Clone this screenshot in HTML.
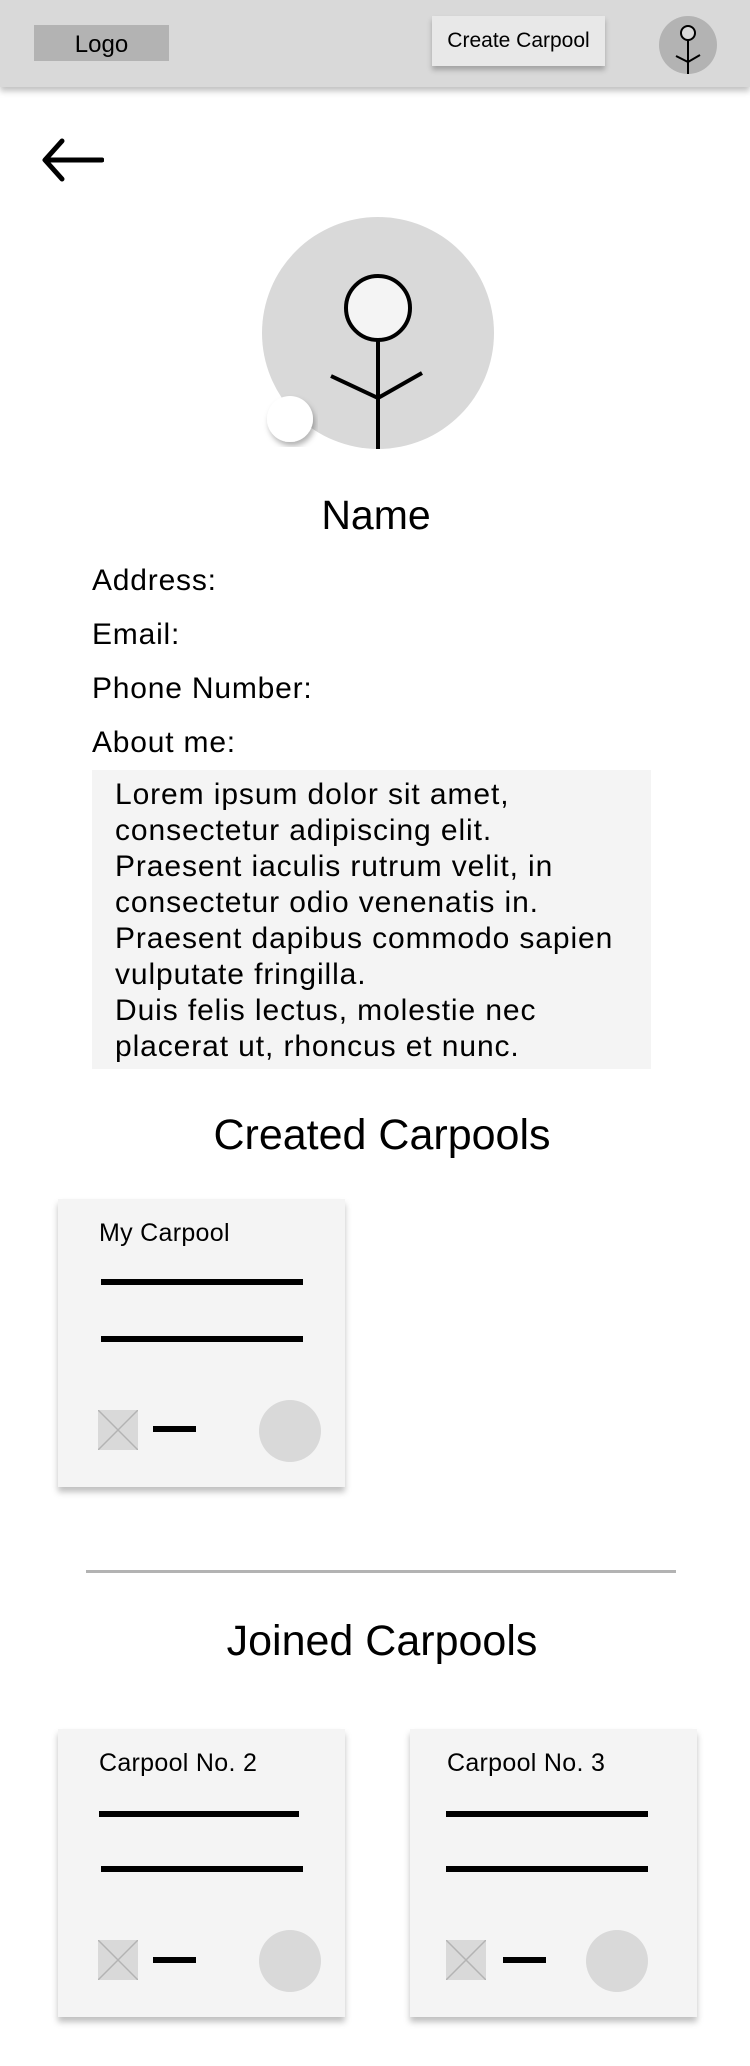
<!DOCTYPE html>
<html><head><meta charset="utf-8"><style>
*{margin:0;padding:0;box-sizing:border-box}
body{width:750px;height:2066px;background:#fff;position:relative;font-family:"Liberation Sans",sans-serif;color:#000;overflow:hidden}
.a{position:absolute}
.hdr{left:0;top:0;width:750px;height:87px;background:#d9d9d9;box-shadow:0 4px 6px rgba(0,0,0,.25)}
.card{background:#f4f4f4;box-shadow:0 5px 6px rgba(0,0,0,.25);width:287px;height:288px}
.bar{background:#000;height:6px}
.ct{font-size:25px;letter-spacing:.3px}
.t{font-size:30px;left:92px;letter-spacing:.8px}
</style></head><body>
<div class="a hdr"></div>
<div class="a" style="left:34px;top:25px;width:135px;height:36px;background:#b3b3b3;font-size:24px;text-align:center;line-height:40px">Logo</div>
<div class="a" style="left:432px;top:16px;width:173px;height:50px;background:#e8e8e8;box-shadow:0 4px 5px rgba(0,0,0,.25);font-size:21px;text-align:center;line-height:50px">Create Carpool</div>
<svg class="a" style="left:659px;top:16px" width="58" height="58" viewBox="0 0 58 58"><circle cx="29" cy="29" r="29" fill="#b3b3b3"/><circle cx="29" cy="17" r="7" fill="#d9d9d9" stroke="#000" stroke-width="2"/><path d="M29 24V58M17 40L29 46L41 39" stroke="#000" stroke-width="2" fill="none"/></svg>
<svg class="a" style="left:40px;top:136px" width="64" height="48" viewBox="0 0 64 48"><path d="M62 24H6M22 5L5 24L22 43" stroke="#000" stroke-width="5" fill="none" stroke-linecap="round" stroke-linejoin="round"/></svg>
<svg class="a" style="left:250px;top:210px" width="260" height="260" viewBox="250 210 260 260"><defs><filter id="s"><feDropShadow dx="2" dy="4" stdDeviation="3" flood-opacity=".3"/></filter></defs><circle cx="378" cy="333" r="116" fill="#d9d9d9"/><circle cx="378" cy="308" r="32" fill="#f4f4f4" stroke="#000" stroke-width="4"/><path d="M378 340V449M331 376L378 398L422 373" stroke="#000" stroke-width="4" fill="none"/><circle cx="290" cy="419" r="23" fill="#fff" filter="url(#s)"/></svg>
<div class="a" style="left:0;width:752px;top:492px;text-align:center;font-size:41px">Name</div>
<div class="a t" style="top:564px">Address:</div>
<div class="a t" style="top:618px">Email:</div>
<div class="a t" style="top:672px">Phone Number:</div>
<div class="a t" style="top:726px">About me:</div>
<div class="a" style="left:92px;top:770px;width:559px;height:299px;background:#f4f4f4;padding:7px 0 0 23px;font-size:30px;line-height:36px;letter-spacing:.9px;white-space:nowrap">Lorem ipsum dolor sit amet,<br>consectetur adipiscing elit.<br>Praesent iaculis rutrum velit, in<br>consectetur odio venenatis in.<br>Praesent dapibus commodo sapien<br>vulputate fringilla.<br>Duis felis lectus, molestie nec<br>placerat ut, rhoncus et nunc.</div>
<div class="a" style="left:0;width:764px;top:1111px;text-align:center;font-size:43px">Created Carpools</div>

<div class="a card" style="left:58px;top:1199px"></div>
<div class="a ct" style="left:99px;top:1219px">My Carpool</div>
<div class="a bar" style="left:101px;top:1279px;width:202px"></div>
<div class="a bar" style="left:101px;top:1336px;width:202px"></div>
<svg class="a" style="left:98px;top:1410px" width="40" height="40"><rect width="40" height="40" fill="#d9d9d9"/><path d="M0 0L40 40M40 0L0 40" stroke="#b3b3b3" stroke-width="1.5"/></svg>
<div class="a bar" style="left:153px;top:1426px;width:43px"></div>
<div class="a" style="left:259px;top:1400px;width:62px;height:62px;border-radius:50%;background:#d9d9d9"></div>

<div class="a" style="left:86px;top:1570px;width:590px;height:3px;background:#b3b3b3"></div>
<div class="a" style="left:0;width:764px;top:1617px;text-align:center;font-size:43px">Joined Carpools</div>

<div class="a card" style="left:58px;top:1729px"></div>
<div class="a ct" style="left:99px;top:1749px">Carpool No. 2</div>
<div class="a bar" style="left:99px;top:1811px;width:200px"></div>
<div class="a bar" style="left:101px;top:1866px;width:202px"></div>
<svg class="a" style="left:98px;top:1940px" width="40" height="40"><rect width="40" height="40" fill="#d9d9d9"/><path d="M0 0L40 40M40 0L0 40" stroke="#b3b3b3" stroke-width="1.5"/></svg>
<div class="a bar" style="left:153px;top:1957px;width:43px"></div>
<div class="a" style="left:259px;top:1930px;width:62px;height:62px;border-radius:50%;background:#d9d9d9"></div>

<div class="a card" style="left:410px;top:1729px"></div>
<div class="a ct" style="left:447px;top:1749px">Carpool No. 3</div>
<div class="a bar" style="left:446px;top:1811px;width:202px"></div>
<div class="a bar" style="left:446px;top:1866px;width:202px"></div>
<svg class="a" style="left:446px;top:1940px" width="40" height="40"><rect width="40" height="40" fill="#d9d9d9"/><path d="M0 0L40 40M40 0L0 40" stroke="#b3b3b3" stroke-width="1.5"/></svg>
<div class="a bar" style="left:503px;top:1957px;width:43px"></div>
<div class="a" style="left:586px;top:1930px;width:62px;height:62px;border-radius:50%;background:#d9d9d9"></div>
</body></html>
